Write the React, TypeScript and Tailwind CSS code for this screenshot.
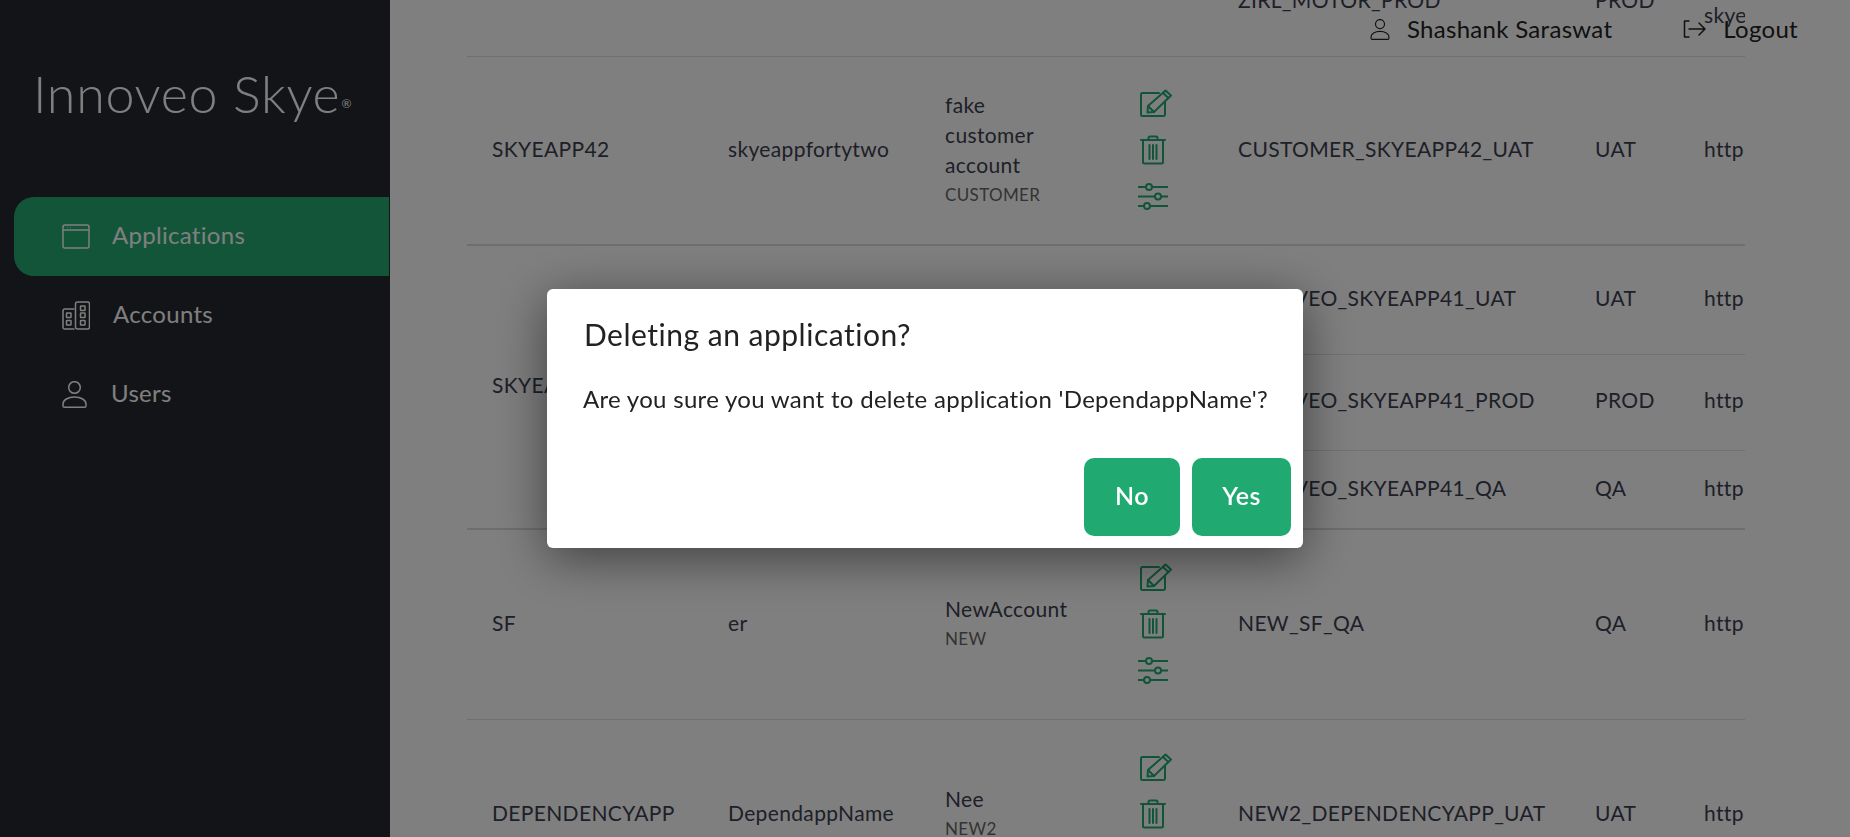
import React from "react";

const GREEN = "#20aa72";

function EditIcon() {
  return (
    <svg width="32" height="28" viewBox="0 0 32 28" fill="none" stroke={GREEN} strokeWidth="2" strokeLinejoin="round" strokeLinecap="round">
      <path d="M19 4H2.5A1.5 1.5 0 0 0 1 5.5V25.5A1.5 1.5 0 0 0 2.5 27H23.5A1.5 1.5 0 0 0 25 25.5V13" />
      <path d="M7.5 23.5L8 17L25.5 1.5L31 6.5L14 23Z" />
      <path d="M8 17L14 23M23 4L28.5 9" />
    </svg>
  );
}

function TrashIcon() {
  return (
    <svg width="26" height="30" viewBox="0 0 26 30" fill="none" stroke={GREEN} strokeWidth="2" strokeLinecap="round" strokeLinejoin="round">
      <path d="M1 5H25M8.5 5V3A1.5 1.5 0 0 1 10 1.5H16A1.5 1.5 0 0 1 17.5 3V5" />
      <path d="M3 5V27A1.5 1.5 0 0 0 4.5 28.5H21.5A1.5 1.5 0 0 0 23 27V5" />
      <path d="M9.5 10V24M13 10V24M16.5 10V24" />
    </svg>
  );
}

function SlidersIcon() {
  return (
    <svg width="30" height="27" viewBox="0 0 30 27" fill="none" stroke={GREEN} strokeWidth="2">
      <path d="M0 4H8M14 4H30M0 13.5H17M23 13.5H30M0 23H6M12 23H30" />
      <circle cx="11" cy="4" r="3" />
      <circle cx="20" cy="13.5" r="3" />
      <circle cx="9" cy="23" r="3" />
    </svg>
  );
}

function WindowIcon() {
  return (
    <svg width="28" height="25" viewBox="0 0 28 25" fill="none" stroke="#ffffff" strokeWidth="1.5" strokeLinejoin="round">
      <rect x="1" y="1" width="26" height="23" rx="2" />
      <path d="M1 6H27M5 3.5H5.5M8 3.5H8.5" />
    </svg>
  );
}

function AccountsIcon() {
  return (
    <svg width="28" height="29" viewBox="0 0 28 29" fill="none" stroke="#ffffff" strokeWidth="1.5" strokeLinejoin="round">
      <path d="M12.5 8H3A2 2 0 0 0 1 10V26A2 2 0 0 0 3 28H12.5" />
      <rect x="13.5" y="1" width="14" height="27" rx="2" />
      <rect x="4.5" y="12" width="4.5" height="4.5" rx="0.5" />
      <rect x="4.5" y="19.5" width="4.5" height="4.5" rx="0.5" />
      <rect x="18.5" y="5" width="4.5" height="4.5" rx="0.5" />
      <rect x="18.5" y="12" width="4.5" height="4.5" rx="0.5" />
      <rect x="18.5" y="19.5" width="4.5" height="4.5" rx="0.5" />
    </svg>
  );
}

function PersonIcon({ w, h, color }: { w: number; h: number; color: string }) {
  return (
    <svg width={w} height={h} viewBox="0 0 25 27" fill="none" stroke={color} strokeWidth="1.5" strokeLinejoin="round">
      <circle cx="12.5" cy="6.5" r="5.8" />
      <path d="M2.5 26.2A1.5 1.5 0 0 1 1 24.7V23C1 19 6 16 12.5 16S24 19 24 23V24.7A1.5 1.5 0 0 1 22.5 26.2Z" />
    </svg>
  );
}

function LogoutIcon() {
  return (
    <svg width="24" height="18" viewBox="0 0 24 18" fill="none" stroke="#222222" strokeWidth="1.5" strokeLinecap="round" strokeLinejoin="round">
      <path d="M6 1H1.5V17H6M6 9H22M16 3L22 9L16 15" />
    </svg>
  );
}

function Actions() {
  return (
    <div className="flex flex-col items-start gap-[18px] pb-[2px]">
      <div className="ml-[1px]"><EditIcon /></div>
      <div className="ml-[1px]"><TrashIcon /></div>
      <div className="-ml-[1px]"><SlidersIcon /></div>
    </div>
  );
}

function Account({ lines, code }: { lines: string[]; code: string }) {
  return (
    <div className="leading-[30px]">
      {lines.map((l) => (
        <div key={l}>{l}</div>
      ))}
      <div className="text-[17px] text-[#666666]">{code}</div>
    </div>
  );
}

const cell = "align-middle pl-[25px] pr-0 pb-[4px] overflow-hidden";
const iconCell = "align-middle pl-[25px] pr-0 overflow-hidden";

export default function App() {
  return (
    <div className="flex h-screen w-full overflow-hidden bg-white font-['Lato',sans-serif] text-[21px] tracking-[0.35px] text-[#3c4050]">
      <aside className="w-[390px] shrink-0 bg-[#26282e] text-white">
        <div className="flex h-[197px] items-start pl-[33px] pt-[59px]">
          <span className="text-[52px] leading-[68px] font-light tracking-[0.7px]">Innoveo Skye</span>
          <span className="mt-[36px] ml-[1px] text-[12px]">®</span>
        </div>
        <nav className="flex flex-col pl-[14px] pr-[1px] text-[24px] leading-[30px] tracking-[0.3px]">
          <a className="flex h-[79px] items-center gap-[22px] rounded-l-[20px] bg-[#24aa72] pl-[48px]">
            <WindowIcon />
            <span className="pb-[3px]">Applications</span>
          </a>
          <a className="flex h-[79px] items-center gap-[23px] pl-[48px]">
            <AccountsIcon />
            <span className="pb-[3px]">Accounts</span>
          </a>
          <a className="flex h-[79px] items-center gap-[24px] pl-[48px]">
            <PersonIcon w={25} h={27} color="#ffffff" />
            <span className="pb-[3px]">Users</span>
          </a>
        </nav>
      </aside>

      <main className="relative flex-1 overflow-hidden">
        <div className="ml-[77px] mr-[105px] overflow-hidden">
          <table className="-mt-[56px] w-[1278px] table-fixed border-collapse">
            <colgroup>
              <col className="w-[236px]" />
              <col className="w-[217px]" />
              <col className="w-[194px]" />
              <col className="w-[99px]" />
              <col className="w-[357px]" />
              <col className="w-[109px]" />
              <col className="w-[66px]" />
            </colgroup>
            <tbody>
              <tr className="h-[112px] border-b border-[#e0e0e0]">
                <td className={cell}></td>
                <td className={cell}></td>
                <td className={cell}></td>
                <td className={iconCell}></td>
                <td className={iconCell}>ZIRL_MOTOR_PROD</td>
                <td className={iconCell}>PROD</td>
                <td className={`${iconCell} leading-[30px]`}>http<br />skye</td>
              </tr>
              <tr className="h-[189px] border-b-2 border-[#dcdcdc]">
                <td className={cell}>SKYEAPP42</td>
                <td className={cell}>skyeappfortytwo</td>
                <td className={iconCell}><Account lines={["fake", "customer", "account"]} code="CUSTOMER" /></td>
                <td className={iconCell}><Actions /></td>
                <td className={cell}>CUSTOMER_SKYEAPP42_UAT</td>
                <td className={cell}>UAT</td>
                <td className={cell}>http</td>
              </tr>
              <tr className="h-[109px] border-b border-[#e0e0e0]">
                <td rowSpan={3} className={cell}>SKYEAPP41</td>
                <td rowSpan={3} className={cell}>skyeappfortyone</td>
                <td rowSpan={3} className={iconCell}><Account lines={["Innoveo"]} code="INNOVEO" /></td>
                <td rowSpan={3} className={iconCell}><Actions /></td>
                <td className={cell}>INNOVEO_SKYEAPP41_UAT</td>
                <td className={cell}>UAT</td>
                <td className={cell}>http</td>
              </tr>
              <tr className="h-[96px] border-b border-[#e0e0e0]">
                <td className={cell}>INNOVEO_SKYEAPP41_PROD</td>
                <td className={cell}>PROD</td>
                <td className={cell}>http</td>
              </tr>
              <tr className="h-[79px] border-b-2 border-[#dcdcdc]">
                <td className={cell}>INNOVEO_SKYEAPP41_QA</td>
                <td className={cell}>QA</td>
                <td className={cell}>http</td>
              </tr>
              <tr className="h-[190px] border-b border-[#e0e0e0]">
                <td className={cell}>SF</td>
                <td className={cell}>er</td>
                <td className={iconCell}><Account lines={["NewAccount"]} code="NEW" /></td>
                <td className={iconCell}><Actions /></td>
                <td className={cell}>NEW_SF_QA</td>
                <td className={cell}>QA</td>
                <td className={cell}>http</td>
              </tr>
              <tr className="h-[190px]">
                <td className={cell}>DEPENDENCYAPP</td>
                <td className={cell}>DependappName</td>
                <td className={iconCell}><Account lines={["Nee"]} code="NEW2" /></td>
                <td className={iconCell}><Actions /></td>
                <td className={cell}>NEW2_DEPENDENCYAPP_UAT</td>
                <td className={cell}>UAT</td>
                <td className={cell}>http</td>
              </tr>
            </tbody>
          </table>
        </div>

        <div className="absolute right-[52px] top-[13px] flex items-center text-[24px] leading-[32px] tracking-[0.3px] text-[#222222]">
          <PersonIcon w={20} h={21} color="#222222" />
          <span className="ml-[17px]">Shashank Saraswat</span>
          <span className="ml-[71px]"><LogoutIcon /></span>
          <span className="ml-[16px]">Logout</span>
        </div>
      </main>

      <div className="fixed inset-0 z-10 flex items-center justify-center bg-black/50">
        <div className="flex h-[259px] w-[756px] flex-col rounded-[6px] bg-white text-[#222222] shadow-[0_10px_50px_rgba(0,0,0,0.5)]">
          <div className="pl-[37px] pt-[26px] text-[30px] leading-[38px] tracking-[0.5px]">Deleting an application?</div>
          <div className="pl-[36px] pt-[30px] text-[24px] leading-[32px] tracking-[0.3px]">Are you sure you want to delete application 'DependappName'?</div>
          <div className="mt-auto flex justify-end gap-[12px] pb-[12px] pr-[12px]">
            <button className="h-[78px] w-[96px] rounded-[10px] bg-[#20aa72] pb-[2px] text-[25px] font-semibold text-white">No</button>
            <button className="h-[78px] w-[99px] rounded-[10px] bg-[#20aa72] pb-[2px] text-[25px] font-semibold text-white">Yes</button>
          </div>
        </div>
      </div>
    </div>
  );
}
